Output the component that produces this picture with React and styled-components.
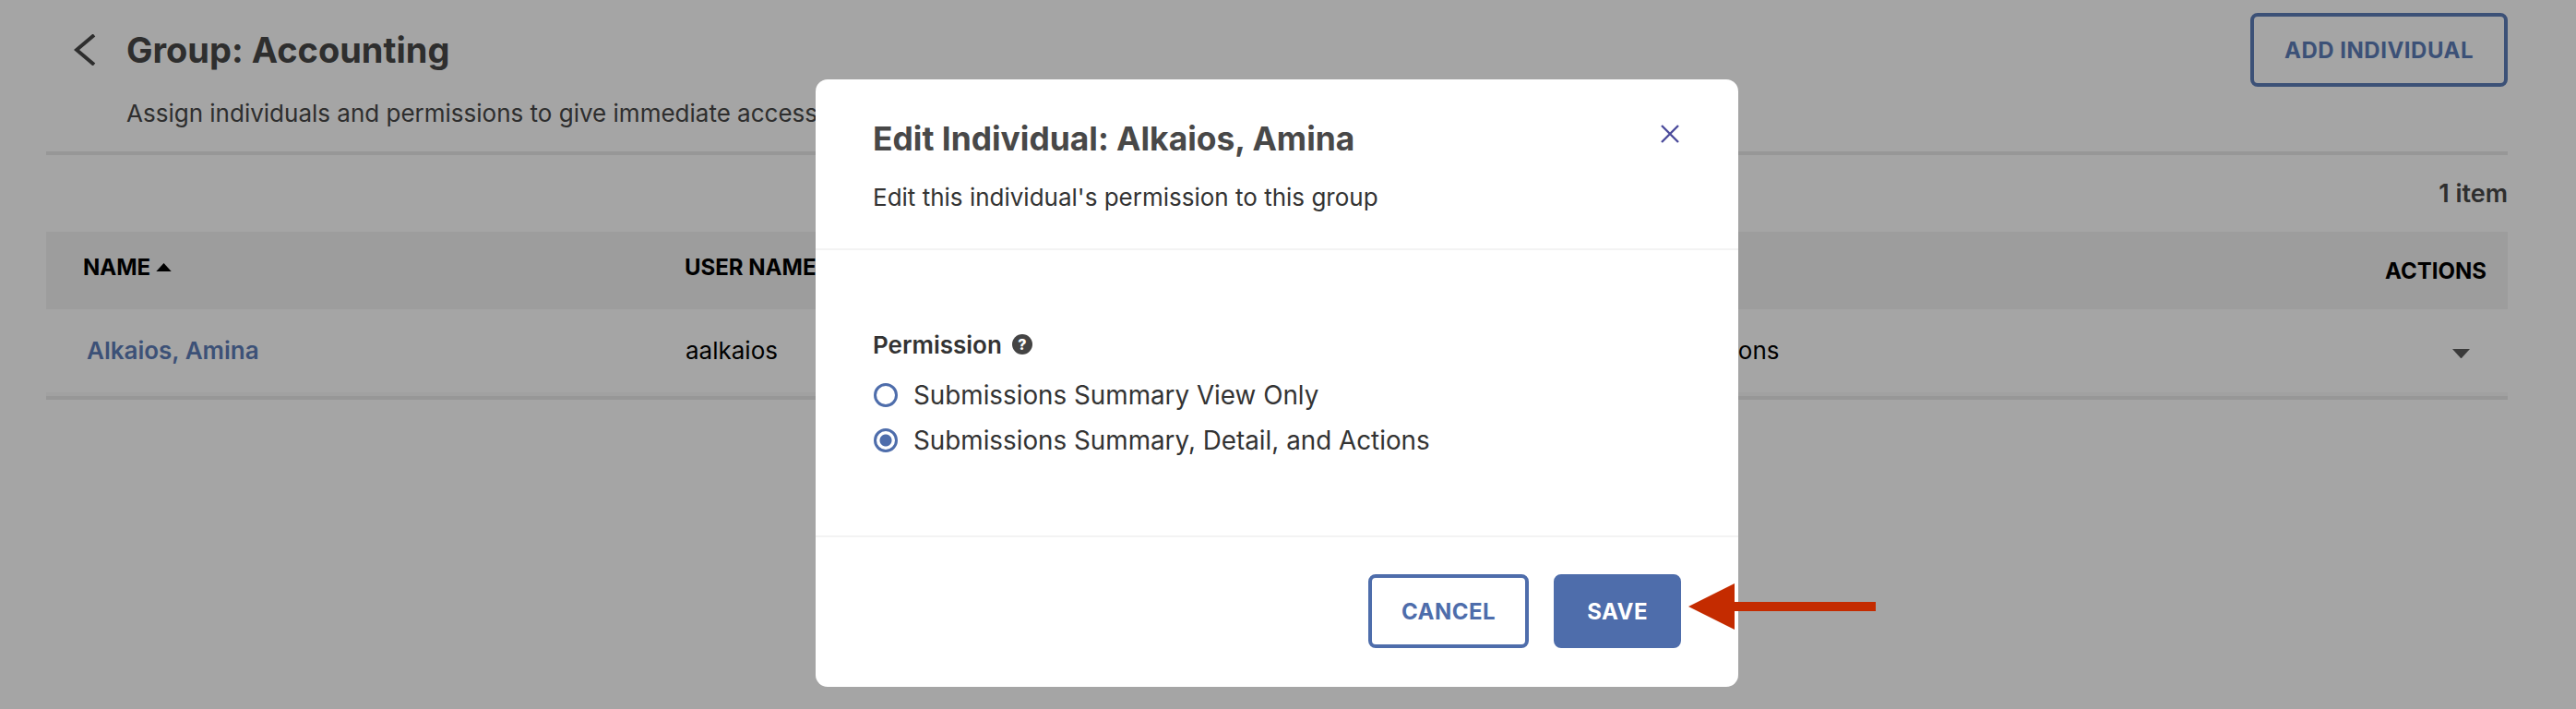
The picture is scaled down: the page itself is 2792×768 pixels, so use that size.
import React from 'react'
import styled, { createGlobalStyle } from 'styled-components'

const GlobalStyle = createGlobalStyle`
  html, body {
    margin: 0;
    padding: 0;
    background: #fff;
    font-family: Inter, "Liberation Sans", sans-serif;
  }
`

const Page = styled.div`
  position: relative;
  width: 2792px;
  height: 768px;
  overflow: hidden;
  background: #fff;
  box-sizing: border-box;
  padding: 14px 74px 0 50px;
`

const TopRow = styled.div`
  display: flex;
  justify-content: space-between;
  align-items: flex-start;
  height: 150px;
  border-bottom: 4px solid #e9e9e9;
`

const Heading = styled.div`
  display: flex;
  flex-direction: column;
  padding: 17px 0 0 30px;
`

const TitleRow = styled.div`
  display: flex;
  align-items: center;
  gap: 28px;
`

const BackButton = styled.button`
  display: flex;
  padding: 0;
  border: 0;
  background: none;
  color: #484848;
`

const PageTitle = styled.h1`
  margin: 0;
  font-size: 38px;
  line-height: 46px;
  font-weight: 700;
  color: #484848;
`

const PageLead = styled.p`
  margin: 30px 0 0 57px;
  font-size: 26px;
  line-height: 32px;
  color: #484848;
  white-space: nowrap;
`

const Button = styled.button`
  box-sizing: border-box;
  height: 80px;
  padding: 0 ${({ $pad }) => $pad}px;
  border: 4px solid #5e7db9;
  border-radius: 8px;
  background: ${({ $primary }) => ($primary ? '#4e6dab' : '#fff')};
  border-color: ${({ $primary }) => ($primary ? '#4e6dab' : '#5e7db9')};
  color: ${({ $primary }) => ($primary ? '#fff' : '#5e7db9')};
  font-family: inherit;
  font-size: 24px;
  font-weight: 700;
  letter-spacing: 0.5px;
`

const ModalButton = styled(Button)`
  border-color: #4e6dab;
  color: ${({ $primary }) => ($primary ? '#fff' : '#4e6dab')};
`

const ItemCount = styled.div`
  padding: 26px 0;
  height: 31px;
  text-align: right;
  font-size: 27px;
  line-height: 31px;
  font-weight: 600;
  color: #484848;
`

const HeaderRow = styled.div`
  display: grid;
  grid-template-columns: 652px 662px 1fr auto;
  align-items: center;
  height: 84px;
  padding: 0 23px 0 40px;
  background: #f3f3f3;
  font-size: 24px;
  font-weight: 700;
  color: #000;
`

const HeaderCell = styled.span`
  margin-bottom: 7px;
`

const SortLabel = styled(HeaderCell)`
  display: flex;
  align-items: center;
  gap: 6px;
`

const BodyRow = styled.div`
  display: grid;
  grid-template-columns: 649px 662px 1fr auto;
  align-items: center;
  height: 88px;
  padding: 0 41px 6px 44px;
  border-bottom: 4px solid #e9e9e9;
  box-shadow: inset 0 -4px 0 #f9f9f9;
  font-size: 26px;
  color: #000;
`

const NameLink = styled.a`
  font-size: 26px;
  font-weight: 600;
  color: #5e7db9;
`

const RowCaret = styled.span`
  display: flex;
  margin-top: 8px;
`

const Overlay = styled.div`
  position: absolute;
  inset: 0;
  background: rgba(0, 0, 0, 0.353);
`

const Modal = styled.div`
  position: absolute;
  left: 884px;
  top: 86px;
  width: 1000px;
  height: 658px;
  display: flex;
  flex-direction: column;
  border-radius: 13px;
  background: #fff;
`

const ModalHeader = styled.header`
  position: relative;
  box-sizing: border-box;
  height: 185px;
  padding: 43px 62px 0;
  border-bottom: 2px solid #f3f3f3;
`

const ModalTitle = styled.h2`
  margin: 0;
  font-size: 35.4px;
  line-height: 44px;
  font-weight: 700;
  color: #484848;
`

const ModalLead = styled.p`
  margin: 25px 0 0;
  font-size: 26px;
  line-height: 32px;
  color: #333;
`

const CloseButton = styled.button`
  position: absolute;
  right: 64px;
  top: 49px;
  display: flex;
  padding: 0;
  border: 0;
  background: none;
  color: #4b4b9b;
`

const ModalBody = styled.div`
  box-sizing: border-box;
  height: 311px;
  padding: 90px 62px 0;
  border-bottom: 2px solid #f3f3f3;
`

const FieldLabel = styled.div`
  display: flex;
  align-items: center;
  gap: 11px;
  height: 24px;
  margin-bottom: 18px;
  font-size: 26px;
  font-weight: 600;
  color: #333;
`

const HelpBadge = styled.span`
  display: flex;
  align-items: center;
  justify-content: center;
  width: 22px;
  height: 22px;
  border-radius: 50%;
  background: #444;
  color: #fff;
  font-size: 16px;
  font-weight: 800;
`

const RadioRow = styled.label`
  display: flex;
  align-items: center;
  gap: 17px;
  height: 49px;
  font-size: 27.8px;
  color: #333;
`

const RadioDot = styled.span`
  box-sizing: border-box;
  flex: none;
  width: 26px;
  height: 26px;
  margin-left: 1px;
  border: 3px solid #4e6dab;
  border-radius: 50%;
  background: ${({ $checked }) =>
    $checked ? 'radial-gradient(circle, #4e6dab 0 6px, #fff 7px)' : '#fff'};
`

const ModalFooter = styled.footer`
  display: flex;
  justify-content: flex-end;
  gap: 27px;
  padding: 40px 62px 0 0;
`

const Arrow = styled.svg`
  position: absolute;
  left: 1830px;
  top: 632px;
`

const Triangle = ({ up, size, color }) => (
  <svg width={size} height={size * 0.55} viewBox="0 0 20 11">
    <path d={up ? 'M0 11 L10 0 L20 11 Z' : 'M0 0 L20 0 L10 11 Z'} fill={color} />
  </svg>
)

export default function App() {
  return (
    <Page>
      <GlobalStyle />
      <TopRow>
        <Heading>
          <TitleRow>
            <BackButton>
              <svg width="29" height="34" viewBox="0 0 29 34" fill="none" stroke="currentColor" strokeWidth="4">
                <path d="M22 1 L3 17 L22 33" />
              </svg>
            </BackButton>
            <PageTitle>Group: Accounting</PageTitle>
          </TitleRow>
          <PageLead>Assign individuals and permissions to give immediate access</PageLead>
        </Heading>
        <Button $pad={33}>ADD INDIVIDUAL</Button>
      </TopRow>
      <ItemCount>1 item</ItemCount>
      <HeaderRow>
        <SortLabel>NAME <Triangle up size={17} color="#000" /></SortLabel>
        <HeaderCell>USER NAME</HeaderCell>
        <HeaderCell />
        <span>ACTIONS</span>
      </HeaderRow>
      <BodyRow>
        <NameLink>Alkaios, Amina</NameLink>
        <span>aalkaios</span>
        <span>Submissions Summary, Detail, and Actions</span>
        <RowCaret><Triangle size={19} color="#5c5c5c" /></RowCaret>
      </BodyRow>
      <Overlay />
      <Modal>
        <ModalHeader>
          <ModalTitle>Edit Individual: Alkaios, Amina</ModalTitle>
          <ModalLead>Edit this individual's permission to this group</ModalLead>
          <CloseButton>
            <svg width="20" height="20" viewBox="0 0 20 20" fill="none" stroke="currentColor" strokeWidth="2.4">
              <path d="M1 1 L19 19 M19 1 L1 19" />
            </svg>
          </CloseButton>
        </ModalHeader>
        <ModalBody>
          <FieldLabel>Permission <HelpBadge>?</HelpBadge></FieldLabel>
          <RadioRow><RadioDot />Submissions Summary View Only</RadioRow>
          <RadioRow><RadioDot $checked />Submissions Summary, Detail, and Actions</RadioRow>
        </ModalBody>
        <ModalFooter>
          <ModalButton $pad={32}>CANCEL</ModalButton>
          <ModalButton $primary $pad={32}>SAVE</ModalButton>
        </ModalFooter>
      </Modal>
      <Arrow width="203" height="50" viewBox="0 0 203 50">
        <path d="M0 25 L50 0 L50 20 L203 20 L203 30 L50 30 L50 50 Z" fill="#c42b00" />
      </Arrow>
    </Page>
  )
}
